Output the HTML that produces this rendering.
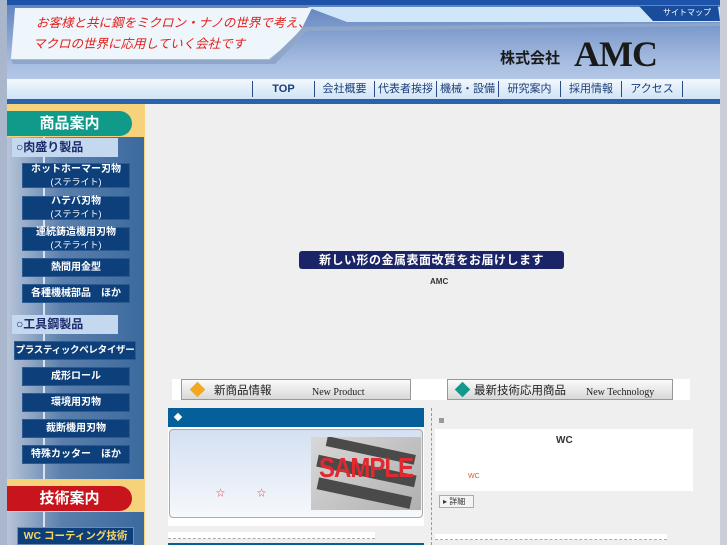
<!DOCTYPE html>
<html><head><meta charset="utf-8"><style>
*{margin:0;padding:0;box-sizing:border-box}
body{width:727px;height:545px;overflow:hidden;background:#e9ebee;font-family:"Liberation Sans","Noto Sans CJK JP",sans-serif;position:relative}
.a{position:absolute}
.btn{position:absolute;left:22px;width:108px;background:#0d3f7a;color:#fff;font-size:10px;font-weight:bold;text-align:center;line-height:12px;display:flex;flex-direction:column;justify-content:center;border:1px solid #2a5a90;white-space:nowrap}
.btn small{font-size:9px;font-weight:normal}
.cat{position:absolute;left:12px;width:106px;height:19px;background:#c4d8f0;color:#1a2a6a;font-size:12px;font-weight:bold;line-height:19px;padding-left:4px}
.nav{position:absolute;top:81px;height:16px;font-size:11px;color:#1a3d7a;text-align:center;line-height:16px;border-left:1px solid #2a4a88}
</style></head><body>
<!-- header -->
<div class="a" style="left:0;top:0;width:727px;height:104px;background:linear-gradient(#5c7fbc,#a6bde0 60%,#c9d7ee)"></div>
<div class="a" style="left:0;top:0;width:727px;height:5px;background:#1d53a8"></div>
<div class="a" style="left:0;top:0;width:7px;height:545px;background:#a9b6cc"></div>
<div class="a" style="left:720px;top:0;width:7px;height:545px;background:#c9ced8"></div>
<svg class="a" style="left:7px;top:5px" width="713" height="80"><polygon points="300,2 713,2 713,17 340,17" fill="#cfe7f8"/><polygon points="8,3 305,3 295,23 280,40 262,54 4,54" fill="#eef6fc"/><polygon points="4,55 263,55 297,22 713,18 713,21 300,26 268,59 6,59" fill="#8fa6c8"/><polygon points="632,1 711,1 713,16 646,16" fill="#1a4c9c"/></svg>
<div class="a" style="left:36px;top:12px;font-size:12.5px;color:#e0201a;font-style:italic">お客様と共に鋼をミクロン・ナノの世界で考え、</div>
<div class="a" style="left:33px;top:33px;font-size:12.5px;color:#e0201a;font-style:italic">マクロの世界に応用していく会社です</div>
<div class="a" style="left:663px;top:7px;font-size:8px;color:#fff">サイトマップ</div>
<div class="a" style="left:500px;top:47px;font-size:15px;font-weight:bold;color:#1a1a1a">株式会社</div>
<div class="a" style="left:574px;top:33px;font-size:36px;font-family:'Liberation Serif',serif;font-weight:bold;color:#1a1a1a;letter-spacing:-1px">AMC</div>
<div class="a" style="left:7px;top:79px;width:713px;height:20px;background:linear-gradient(#f2f8fd,#cfe3f5)"></div>
<div class="nav" style="left:252px;width:62px;font-weight:bold">TOP</div>
<div class="nav" style="left:314px;width:60px">会社概要</div>
<div class="nav" style="left:374px;width:62px">代表者挨拶</div>
<div class="nav" style="left:436px;width:62px">機械・設備</div>
<div class="nav" style="left:498px;width:62px">研究案内</div>
<div class="nav" style="left:560px;width:61px">採用情報</div>
<div class="nav" style="left:621px;width:62px;border-right:1px solid #2a4a88">アクセス</div>
<div class="a" style="left:7px;top:99px;width:713px;height:5px;background:#2a62ae"></div>
<!-- main bg -->
<div class="a" style="left:145px;top:104px;width:575px;height:441px;background:#efefef"></div>
<!-- sidebar -->
<div class="a" style="left:7px;top:104px;width:138px;height:441px;background:#f6d27b"></div>
<div class="a" style="left:7px;top:137px;width:137px;height:342px;background:linear-gradient(90deg,#b8c4d8,#5a7fac 40%,#3b6a9e)"></div>
<div class="a" style="left:43px;top:137px;width:2px;height:342px;background:#d8e2f0"></div>
<div class="a" style="left:7px;top:111px;width:125px;height:25px;background:#0f9a8a;border-radius:0 14px 14px 0;color:#fff;font-size:15px;font-weight:bold;text-align:center;line-height:25px">商品案内</div>
<div class="cat" style="top:138px">○肉盛り製品</div>
<div class="btn" style="top:163px;height:25px">ホットホーマー刃物<small>(ステライト)</small></div>
<div class="btn" style="top:196px;height:24px">ハテバ刃物<small>(ステライト)</small></div>
<div class="btn" style="top:227px;height:24px">連続鋳造機用刃物<small>(ステライト)</small></div>
<div class="btn" style="top:258px;height:19px">熱間用金型</div>
<div class="btn" style="top:284px;height:19px">各種機械部品　ほか</div>
<div class="cat" style="top:315px">○工具鋼製品</div>
<div class="btn" style="left:14px;width:122px;top:341px;height:19px;font-size:9.5px;letter-spacing:-0.3px">プラスティックペレタイザー</div>
<div class="btn" style="top:367px;height:19px">成形ロール</div>
<div class="btn" style="top:393px;height:19px">環境用刃物</div>
<div class="btn" style="top:419px;height:19px">裁断機用刃物</div>
<div class="btn" style="top:445px;height:19px">特殊カッター　ほか</div>
<div class="a" style="left:7px;top:486px;width:125px;height:25px;background:#c8141c;border-radius:0 14px 14px 0;color:#fff;font-size:15px;font-weight:bold;text-align:center;line-height:25px">技術案内</div>
<div class="a" style="left:7px;top:512px;width:137px;height:33px;background:linear-gradient(90deg,#b8c4d8,#5a7fac 40%,#3b6a9e)"></div>
<div class="a" style="left:43px;top:512px;width:2px;height:33px;background:#d8e2f0"></div>
<div class="a" style="left:17px;top:527px;width:117px;height:18px;background:#0d3f7a;border:1px solid #6a8ab8;color:#f5d56a;font-size:10.5px;font-weight:bold;text-align:center;line-height:17px">WC コーティング技術</div>
<!-- center -->
<div class="a" style="left:299px;top:251px;width:265px;height:18px;background:#1a2466;border-radius:3px;color:#fff;font-size:12px;font-weight:bold;text-align:center;line-height:18px;letter-spacing:0.5px">新しい形の金属表面改質をお届けします</div>
<div class="a" style="left:430px;top:277px;font-size:8px;font-weight:bold;color:#333">AMC</div>
<!-- section tabs -->
<div class="a" style="left:172px;top:379px;width:518px;height:21px;background:#fff"></div>
<div class="a" style="left:181px;top:379px;width:230px;height:21px;background:linear-gradient(#fafafa,#d8d8d8);border:1px solid #999"></div>
<div class="a" style="left:192px;top:384px;width:11px;height:11px;background:#f4a81c;transform:rotate(45deg)"></div>
<div class="a" style="left:214px;top:382px;font-size:11.5px;color:#222">新商品情報</div>
<div class="a" style="left:312px;top:387px;font-size:10px;font-family:'Liberation Serif',serif;color:#222">New Product</div>
<div class="a" style="left:447px;top:379px;width:226px;height:21px;background:linear-gradient(#fafafa,#d8d8d8);border:1px solid #999"></div>
<div class="a" style="left:457px;top:384px;width:11px;height:11px;background:#14988e;transform:rotate(45deg)"></div>
<div class="a" style="left:474px;top:382px;font-size:11.5px;color:#222">最新技術応用商品</div>
<div class="a" style="left:586px;top:387px;font-size:10px;font-family:'Liberation Serif',serif;color:#222">New Technology</div>
<!-- left column -->
<div class="a" style="left:168px;top:408px;width:256px;height:19px;background:#05609a"></div>
<div class="a" style="left:175px;top:414px;width:6px;height:6px;background:#fff;transform:rotate(45deg)"></div>
<div class="a" style="left:168px;top:427px;width:256px;height:99px;background:#fff"></div>
<div class="a" style="left:169px;top:429px;width:254px;height:89px;border:1px solid #aaa;border-radius:4px;background:linear-gradient(#d4e0f2,#f6f8fc)"></div>
<div class="a" style="left:311px;top:437px;width:110px;height:73px;background:linear-gradient(135deg,#d8d8d8,#b0b0b0)"></div>
<svg class="a" style="left:311px;top:437px" width="110" height="73"><g fill="#4a4a4a" transform="rotate(12 55 36)"><rect x="10" y="8" width="90" height="10"/><rect x="5" y="28" width="100" height="12"/><rect x="10" y="50" width="95" height="12"/></g></svg>
<div class="a" style="left:319px;top:455px;font-size:24px;font-weight:bold;color:#e02a30;letter-spacing:-1px;transform:scaleY(1.15)">SAMPLE</div>
<div class="a" style="left:216px;top:486px;font-size:9px;color:#e05050">☆</div>
<div class="a" style="left:257px;top:486px;font-size:9px;color:#e05050">☆</div>
<div class="a" style="left:168px;top:532px;width:207px;height:7px;background:#fff;border-bottom:1px dashed #aaa"></div>
<div class="a" style="left:168px;top:543px;width:256px;height:2px;background:#05609a"></div>
<div class="a" style="left:431px;top:408px;width:0;height:137px;border-left:1px dashed #999"></div>
<!-- right column -->
<div class="a" style="left:439px;top:418px;width:5px;height:5px;background:#999"></div>
<div class="a" style="left:435px;top:429px;width:258px;height:62px;background:#fff"></div>
<div class="a" style="left:556px;top:435px;font-size:10px;font-weight:bold;color:#333">WC</div>
<div class="a" style="left:468px;top:473px;font-size:7px;color:#e05a1a">WC</div>
<div class="a" style="left:439px;top:495px;width:35px;height:13px;background:#f4f4f4;border:1px solid #aaa;font-size:8px;line-height:11px;padding-left:3px;color:#333">▸ 詳細</div>
<div class="a" style="left:435px;top:534px;width:232px;height:6px;background:#fff;border-bottom:1px dashed #aaa"></div>
</body></html>
